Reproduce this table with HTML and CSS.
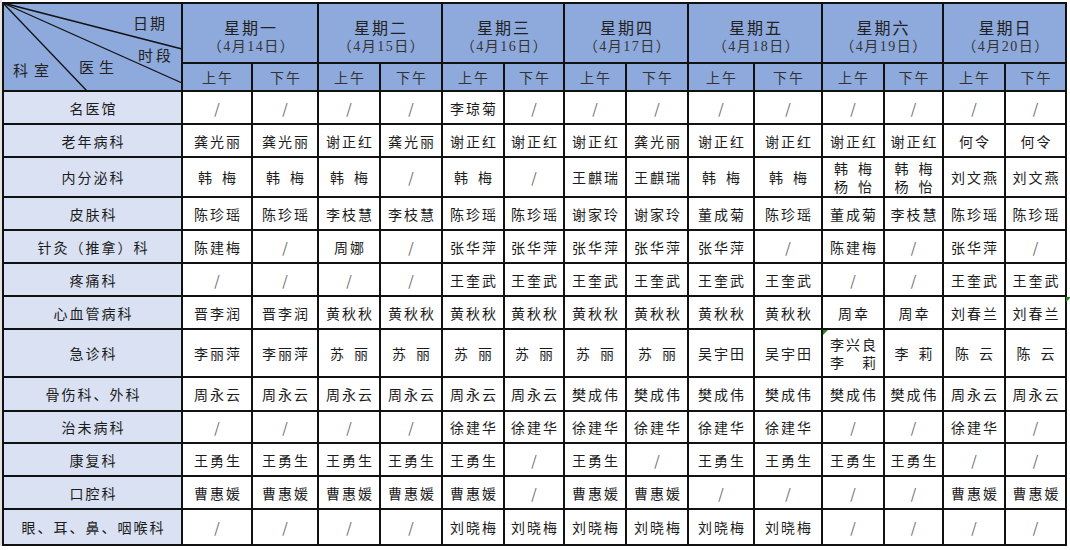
FILE: index.html
```html
<!DOCTYPE html>
<html lang="zh-CN">
<head>
<meta charset="utf-8">
<title>门诊排班表</title>
<link rel="stylesheet" href="styles.css">
</head>
<body>
<div class="sheet">
  <div class="corner">
    <svg class="diag" width="177" height="86" viewBox="0 0 177 86">
      <line x1="-1" y1="-1" x2="178" y2="45"/>
      <line x1="-1" y1="-1" x2="178" y2="79"/>
      <line x1="-1" y1="-1" x2="83" y2="87"/>
    </svg>
    <span class="ct ct-date">日期</span>
    <span class="ct ct-time">时段</span>
    <span class="ct ct-doc">医生</span>
    <span class="ct ct-dept">科室</span>
  </div>
  <div class="hd day"><span class="wk">星期一</span><span class="dt">（4月14日）</span></div>
  <div class="hd day"><span class="wk">星期二</span><span class="dt">（4月15日）</span></div>
  <div class="hd day"><span class="wk">星期三</span><span class="dt">（4月16日）</span></div>
  <div class="hd day"><span class="wk">星期四</span><span class="dt">（4月17日）</span></div>
  <div class="hd day"><span class="wk">星期五</span><span class="dt">（4月18日）</span></div>
  <div class="hd day"><span class="wk">星期六</span><span class="dt">（4月19日）</span></div>
  <div class="hd day"><span class="wk">星期日</span><span class="dt">（4月20日）</span></div>

  <div class="hd ap">上午</div><div class="hd ap">下午</div>
  <div class="hd ap">上午</div><div class="hd ap">下午</div>
  <div class="hd ap">上午</div><div class="hd ap">下午</div>
  <div class="hd ap">上午</div><div class="hd ap">下午</div>
  <div class="hd ap">上午</div><div class="hd ap">下午</div>
  <div class="hd ap">上午</div><div class="hd ap">下午</div>
  <div class="hd ap">上午</div><div class="hd ap">下午</div>

  <div class="lb">名医馆</div>
  <div class="d sl">/</div><div class="d sl">/</div><div class="d sl">/</div><div class="d sl">/</div>
  <div class="d">李琼菊</div><div class="d sl">/</div><div class="d sl">/</div><div class="d sl">/</div>
  <div class="d sl">/</div><div class="d sl">/</div><div class="d sl">/</div><div class="d sl">/</div>
  <div class="d sl">/</div><div class="d sl">/</div>

  <div class="lb">老年病科</div>
  <div class="d">龚光丽</div><div class="d">龚光丽</div><div class="d">谢正红</div><div class="d">龚光丽</div>
  <div class="d">谢正红</div><div class="d">谢正红</div><div class="d">谢正红</div><div class="d">龚光丽</div>
  <div class="d">谢正红</div><div class="d">谢正红</div><div class="d">谢正红</div><div class="d">谢正红</div>
  <div class="d">何令</div><div class="d">何令</div>

  <div class="lb">内分泌科</div>
  <div class="d">韩 梅</div><div class="d">韩 梅</div><div class="d">韩 梅</div><div class="d sl">/</div>
  <div class="d">韩 梅</div><div class="d sl">/</div><div class="d">王麒瑞</div><div class="d">王麒瑞</div>
  <div class="d">韩 梅</div><div class="d">韩 梅</div>
  <div class="d two">韩 梅<br>杨 怡</div><div class="d two">韩 梅<br>杨 怡</div>
  <div class="d">刘文燕</div><div class="d">刘文燕</div>

  <div class="lb">皮肤科</div>
  <div class="d">陈珍瑶</div><div class="d">陈珍瑶</div><div class="d">李枝慧</div><div class="d">李枝慧</div>
  <div class="d">陈珍瑶</div><div class="d">陈珍瑶</div><div class="d">谢家玲</div><div class="d">谢家玲</div>
  <div class="d">董成菊</div><div class="d">陈珍瑶</div><div class="d">董成菊</div><div class="d">李枝慧</div>
  <div class="d">陈珍瑶</div><div class="d">陈珍瑶</div>

  <div class="lb">针灸（推拿）科</div>
  <div class="d">陈建梅</div><div class="d sl">/</div><div class="d">周娜</div><div class="d sl">/</div>
  <div class="d">张华萍</div><div class="d">张华萍</div><div class="d">张华萍</div><div class="d">张华萍</div>
  <div class="d">张华萍</div><div class="d sl">/</div><div class="d">陈建梅</div><div class="d sl">/</div>
  <div class="d">张华萍</div><div class="d sl">/</div>

  <div class="lb">疼痛科</div>
  <div class="d sl">/</div><div class="d sl">/</div><div class="d sl">/</div><div class="d sl">/</div>
  <div class="d">王奎武</div><div class="d">王奎武</div><div class="d">王奎武</div><div class="d">王奎武</div>
  <div class="d">王奎武</div><div class="d">王奎武</div><div class="d sl">/</div><div class="d sl">/</div>
  <div class="d">王奎武</div><div class="d">王奎武</div>

  <div class="lb">心血管病科</div>
  <div class="d">晋李润</div><div class="d">晋李润</div><div class="d">黄秋秋</div><div class="d">黄秋秋</div>
  <div class="d">黄秋秋</div><div class="d">黄秋秋</div><div class="d">黄秋秋</div><div class="d">黄秋秋</div>
  <div class="d">黄秋秋</div><div class="d">黄秋秋</div><div class="d">周幸</div><div class="d">周幸</div>
  <div class="d">刘春兰</div><div class="d mark-out">刘春兰</div>

  <div class="lb">急诊科</div>
  <div class="d">李丽萍</div><div class="d">李丽萍</div><div class="d">苏 丽</div><div class="d">苏 丽</div>
  <div class="d">苏 丽</div><div class="d">苏 丽</div><div class="d">苏 丽</div><div class="d">苏 丽</div>
  <div class="d">吴宇田</div><div class="d">吴宇田</div>
  <div class="d two mark">李兴良<br>李　莉</div><div class="d">李 莉</div>
  <div class="d">陈 云</div><div class="d">陈 云</div>

  <div class="lb">骨伤科、外科</div>
  <div class="d">周永云</div><div class="d">周永云</div><div class="d">周永云</div><div class="d">周永云</div>
  <div class="d">周永云</div><div class="d">周永云</div><div class="d">樊成伟</div><div class="d">樊成伟</div>
  <div class="d">樊成伟</div><div class="d">樊成伟</div><div class="d">樊成伟</div><div class="d">樊成伟</div>
  <div class="d">周永云</div><div class="d">周永云</div>

  <div class="lb">治未病科</div>
  <div class="d sl">/</div><div class="d sl">/</div><div class="d sl">/</div><div class="d sl">/</div>
  <div class="d">徐建华</div><div class="d">徐建华</div><div class="d">徐建华</div><div class="d">徐建华</div>
  <div class="d">徐建华</div><div class="d">徐建华</div><div class="d sl">/</div><div class="d sl">/</div>
  <div class="d">徐建华</div><div class="d sl">/</div>

  <div class="lb">康复科</div>
  <div class="d">王勇生</div><div class="d">王勇生</div><div class="d">王勇生</div><div class="d">王勇生</div>
  <div class="d">王勇生</div><div class="d sl">/</div><div class="d">王勇生</div><div class="d sl">/</div>
  <div class="d">王勇生</div><div class="d">王勇生</div><div class="d">王勇生</div><div class="d">王勇生</div>
  <div class="d sl">/</div><div class="d sl">/</div>

  <div class="lb">口腔科</div>
  <div class="d">曹惠媛</div><div class="d">曹惠媛</div><div class="d">曹惠媛</div><div class="d">曹惠媛</div>
  <div class="d">曹惠媛</div><div class="d sl">/</div><div class="d">曹惠媛</div><div class="d">曹惠媛</div>
  <div class="d sl">/</div><div class="d sl">/</div><div class="d sl">/</div><div class="d sl">/</div>
  <div class="d">曹惠媛</div><div class="d">曹惠媛</div>

  <div class="lb">眼、耳、鼻、咽喉科</div>
  <div class="d sl">/</div><div class="d sl">/</div><div class="d sl">/</div><div class="d sl">/</div>
  <div class="d">刘晓梅</div><div class="d">刘晓梅</div><div class="d">刘晓梅</div><div class="d">刘晓梅</div>
  <div class="d">刘晓梅</div><div class="d">刘晓梅</div><div class="d sl">/</div><div class="d sl">/</div>
  <div class="d sl">/</div><div class="d sl">/</div>
</div>
</body>
</html>
```
FILE: styles.css
```css
html, body {
  margin: 0;
  background: #ffffff;
}
body {
  border-left: 2px solid #e3e3e3;
  padding-top: 2px;
  font-family: "Noto Sans CJK SC", "Noto Sans", sans-serif;
  color: #1c1c1c;
}
.sheet {
  display: grid;
  width: max-content;
  background: #111111;
  padding: 2px;
  gap: 2px;
  grid-template-columns: 177px 68px 64px 60px 60px 60px 58px 60px 60px 64px 66px 60px 57px 60px 59px;
  grid-template-rows: 58px 26px 31px 31px 38px 31px 31px 31px 31px 46px 32px 30px 31px 31px 34px;
}
.sheet > div {
  display: flex;
  align-items: center;
  justify-content: center;
  text-align: center;
  font-size: 14px;
  line-height: 18px;
  letter-spacing: 2px;
  padding-left: 2px;
  box-sizing: border-box;
  white-space: nowrap;
  word-spacing: 3px;
}
.corner {
  grid-row: 1 / 3;
  grid-column: 1;
  background: #8ea9db;
  position: relative;
}
.diag {
  position: absolute;
  left: 0;
  top: 0;
  overflow: visible;
}
.diag line {
  stroke: #111111;
  stroke-width: 1.3;
}
.ct {
  position: absolute;
  font-size: 15px;
  line-height: 16px;
  color: #222222;
}
.ct-date { left: 129px; top: 11px; letter-spacing: 2px; }
.ct-time { left: 134px; top: 43px; letter-spacing: 3px; }
.ct-doc { left: 75px; top: 55px; letter-spacing: 5px; }
.ct-dept { left: 9px; top: 58px; letter-spacing: 6px; }
.hd {
  background: #8ea9db;
  color: #222222;
}
.sheet > .day {
  grid-column: span 2;
  flex-direction: column;
  padding-top: 8px;
}
.wk {
  font-size: 16px;
  line-height: 20px;
  letter-spacing: 2px;
}
.dt {
  font-family: "Liberation Serif", "Noto Sans CJK SC", serif;
  font-size: 14px;
  line-height: 20px;
  letter-spacing: 1.5px;
  padding-left: 1px;
  color: #333333;
}
.sheet > .ap {
  font-size: 14px;
  color: #333333;
}
.lb {
  background: #d9e1f2;
}
.d {
  background: #ffffff;
}
.sheet > .sl {
  color: #666666;
  letter-spacing: 0;
  padding-left: 0;
}
.mark, .mark-out {
  position: relative;
}
.mark::before {
  content: "";
  position: absolute;
  left: 0;
  top: 0;
  border-top: 5px solid #1e8a1e;
  border-right: 5px solid transparent;
}
.mark-out::after {
  content: "";
  position: absolute;
  right: -6px;
  top: 0;
  border-top: 5px solid #1e8a1e;
  border-right: 5px solid transparent;
}
```
